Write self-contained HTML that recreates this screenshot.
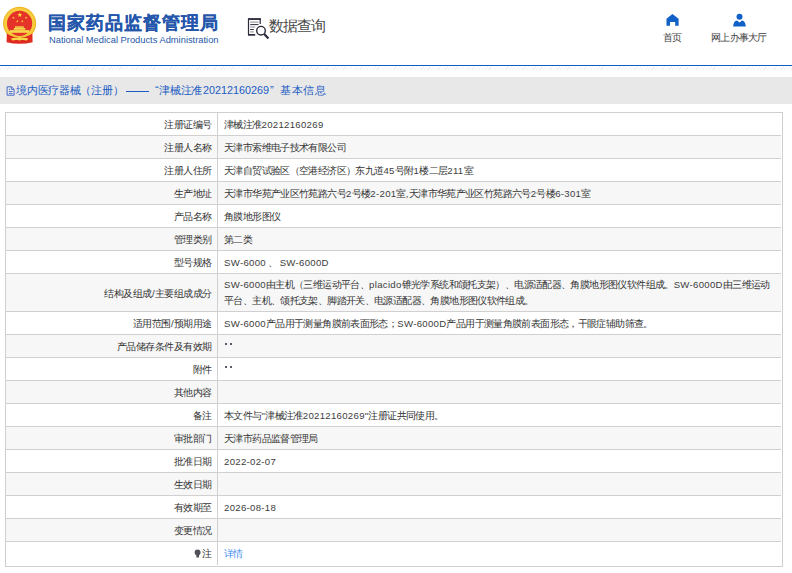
<!DOCTYPE html>
<html><head><meta charset="utf-8">
<style>
*{margin:0;padding:0;box-sizing:border-box}
html,body{width:792px;height:573px;overflow:hidden;background:#fff;font-family:"Liberation Sans",sans-serif;color:#333}
.abs{position:absolute}
#emblem{left:0;top:4px;width:40px;height:44px}
#title{left:48px;top:11px;font-size:18px;letter-spacing:1px;font-weight:bold;color:#2456ab;-webkit-text-stroke:0.15px #2456ab;white-space:nowrap;line-height:24px}
#eng{left:49px;top:35px;font-size:9.33px;color:#2658a8;white-space:nowrap;line-height:10px}
#qicon{left:246px;top:16px;width:24px;height:24px}
#qtext{left:268.5px;top:17px;font-size:15px;letter-spacing:-0.9px;color:#484848;line-height:18px;white-space:nowrap}
.nav{font-size:10px;letter-spacing:-0.75px;color:#444;white-space:nowrap;line-height:11px}
#bline{left:0;top:65px;width:792px;height:1px;background:#0a5fc0}
#dots{left:0;top:67px;width:792px;height:3px;background:repeating-linear-gradient(135deg,#fff 0,#fff 1.5px,#ededed 1.5px,#ededed 2.4px)}
#crumb{left:0;top:77px;width:792px;height:27px;background:#e8e8e8}
.crumbt{top:84px;font-size:11px;letter-spacing:-0.2px;color:#1a5bc4;line-height:13px;white-space:nowrap}
#tbl{left:5px;top:112px;width:778px;height:455px;border:1px solid #cfcfcf}
.row{position:absolute;left:0;width:775px;border-bottom:1px solid #d1cfd0}
.row.g{background:#f7f7f7}
.lab{position:absolute;left:0;top:0;width:212px;height:100%;padding-top:1px;border-right:1px solid #d1cfd0;text-align:right;padding-right:5px;font-size:10px;letter-spacing:-0.48px;color:#333;display:flex;align-items:center;justify-content:flex-end;white-space:nowrap}
.val{position:absolute;left:218px;top:0;right:0;height:100%;padding-top:1px;font-size:10px;letter-spacing:-0.62px;color:#333;display:flex;align-items:center;white-space:nowrap;line-height:16px}
.lat{font-size:9.6px;letter-spacing:0.3px;color:#3d3d3d}
.link{color:#3c8cf0}
.dd{display:inline-block;width:2.4px;height:2px;background:#5a5a6a;margin-left:0.6px;margin-right:2px;position:relative;top:-4.8px}
.pin{display:inline-block;width:8px;height:9px;margin-right:0.5px;position:relative;top:1px}
</style></head><body>
<svg id="emblem" class="abs" viewBox="0 4 40 44">
  <circle cx="19.6" cy="23.4" r="16.6" fill="#f0b92a"/>
  <circle cx="19.6" cy="23.4" r="15.4" fill="#f7cd3e"/>
  <circle cx="19.6" cy="23.4" r="12.6" fill="#e5332a"/>
  <path d="M6.8 33.5 Q19.6 41 32.4 33.5 L32.6 42.2 Q19.6 45.5 6.6 42.2 Z" fill="#df2a20"/>
  <rect x="10" y="30.1" width="19.2" height="2.7" fill="#f6d84a"/>
  <rect x="13.8" y="28" width="11.5" height="1.8" fill="#f6d84a"/>
  <rect x="15" y="26.3" width="8.8" height="1.5" fill="#f6d84a"/>
  <path d="M9 33.2 Q19.6 39.5 30.2 33.2 L30.2 34.8 Q19.6 41 9 34.8 Z" fill="#f2c233"/>
  <path d="M11 38.6 Q15 37 19.6 38.3 Q24.2 37 28.2 38.6 L27 40.4 Q19.6 39.2 12.2 40.4 Z" fill="#f6d84a"/>
  <ellipse cx="19.6" cy="38.8" rx="2.8" ry="1.6" fill="#f6d84a"/>
  <path d="M19.80 12.30 L20.44 14.02 L22.27 14.10 L20.84 15.24 L21.33 17.00 L19.80 15.99 L18.27 17.00 L18.76 15.24 L17.33 14.10 L19.16 14.02Z" fill="#f8d838"/>
  <path d="M13.40 16.45 L13.73 17.34 L14.68 17.38 L13.94 17.98 L14.19 18.89 L13.40 18.37 L12.61 18.89 L12.86 17.98 L12.12 17.38 L13.07 17.34Z" fill="#f8d838"/>
  <path d="M26.10 16.35 L26.43 17.24 L27.38 17.28 L26.64 17.88 L26.89 18.79 L26.10 18.27 L25.31 18.79 L25.56 17.88 L24.82 17.28 L25.77 17.24Z" fill="#f8d838"/>
  <path d="M17.30 19.95 L17.63 20.84 L18.58 20.88 L17.84 21.48 L18.09 22.39 L17.30 21.87 L16.51 22.39 L16.76 21.48 L16.02 20.88 L16.97 20.84Z" fill="#f8d838"/>
  <path d="M22.30 19.95 L22.63 20.84 L23.58 20.88 L22.84 21.48 L23.09 22.39 L22.30 21.87 L21.51 22.39 L21.76 21.48 L21.02 20.88 L21.97 20.84Z" fill="#f8d838"/>
</svg>
<div id="title" class="abs">国家药品监督管理局</div>
<div id="eng" class="abs">National Medical Products Administration</div>

<svg id="qicon" class="abs" viewBox="246 16 24 24">
  <path d="M248.5 35 V19 H260.2 V24" fill="none" stroke="#2b2b3b" stroke-width="1.2"/>
  <rect x="248" y="18.2" width="12.8" height="1.7" fill="#2b2b3b"/>
  <rect x="248" y="34" width="7.2" height="1.7" fill="#2b2b3b"/>
  <rect x="250.2" y="21.6" width="8.3" height="1" fill="#8a8a96"/>
  <rect x="250.2" y="24.1" width="8.3" height="1" fill="#2b2b3b"/>
  <rect x="250.2" y="26.5" width="5" height="1" fill="#8a8a96"/>
  <rect x="250.2" y="29" width="3.5" height="1" fill="#2b2b3b"/>
  <rect x="250.2" y="31.4" width="3.5" height="1" fill="#8a8a96"/>
  <circle cx="261" cy="30.7" r="4.3" fill="#fff" stroke="#2b2b3b" stroke-width="1.4"/>
  <path d="M264.2 34 L268.4 38.4" stroke="#2b2b3b" stroke-width="2.2"/>
</svg>
<div id="qtext" class="abs">数据查询</div>

<svg class="abs" style="left:660px;top:10px" width="24" height="20" viewBox="660 10 24 20">
  <path d="M672.4 13.9 L678.6 18.8 V25.8 H675.2 V22 H670 V25.8 H666.5 V18.8 Z" fill="#1060c8"/>
</svg>
<div class="abs nav" style="left:663px;top:32px">首页</div>
<svg class="abs" style="left:728px;top:10px" width="24" height="20" viewBox="728 10 24 20">
  <circle cx="739.5" cy="16.7" r="3.0" fill="#1060c8"/>
  <path d="M733.1 26.6 Q733.5 21 737 20.4 L739.5 22.6 L742 20.4 Q745.5 21 745.8 26.6 Z" fill="#1060c8"/>
</svg>
<div class="abs nav" style="left:711px;top:32px">网上办事大厅</div>

<div id="bline" class="abs"></div>
<div id="dots" class="abs"></div>
<div id="crumb" class="abs"></div>
<svg class="abs" style="left:5px;top:85px" width="11" height="12" viewBox="0 0 11 12">
  <path d="M2.1 1.8 H6.4 L9.1 4.4 V10.2 H2.1 Z" fill="none" stroke="#3a62c8" stroke-width="0.95"/>
  <path d="M6.4 1.8 V4.4 H9.1" fill="none" stroke="#3a62c8" stroke-width="0.8"/>
  <path d="M3.9 4.4 H5 M3.9 6.5 H7.5 M3.9 8.45 H7.5" stroke="#3a62c8" stroke-width="0.9"/>
</svg>
<div class="abs crumbt" style="left:16px;letter-spacing:-0.25px">境内医疗器械</div>
<div class="abs crumbt" style="left:79.5px;letter-spacing:0">（注册）</div>
<div class="abs" style="left:126px;top:91px;width:23px;height:1px;background:#1a5bc4"></div>
<div class="abs crumbt" style="left:155px">“</div>
<div class="abs crumbt" style="left:159px">津械注准</div>
<div class="abs crumbt" style="left:203px;font-size:10.8px;letter-spacing:0">20212160269</div>
<div class="abs crumbt" style="left:270px">”</div>
<div class="abs crumbt" style="left:280px;letter-spacing:0.6px">基本信息</div>

<div id="tbl" class="abs">
<!--TBL-->
<div class="row" style="top:0px;height:23px;"><div class="lab"><span>注册证编号</span></div><div class="val"><span>津械注准<span class="lat">20212160269</span></span></div></div>
<div class="row g" style="top:23px;height:23px;"><div class="lab"><span>注册人名称</span></div><div class="val"><span>天津市索维电子技术有限公司</span></div></div>
<div class="row" style="top:46px;height:23px;"><div class="lab"><span>注册人住所</span></div><div class="val"><span>天津自贸试验区（空港经济区）东九道<span class="lat">45</span>号附<span class="lat">1</span>楼二层<span class="lat">211</span>室</span></div></div>
<div class="row g" style="top:69px;height:23px;"><div class="lab"><span>生产地址</span></div><div class="val"><span>天津市华苑产业区竹苑路六号<span class="lat">2</span>号楼<span class="lat">2-201</span>室<span class="lat">,</span>天津市华苑产业区竹苑路六号<span class="lat">2</span>号楼<span class="lat">6-301</span>室</span></div></div>
<div class="row" style="top:92px;height:23px;"><div class="lab"><span>产品名称</span></div><div class="val"><span>角膜地形图仪</span></div></div>
<div class="row g" style="top:115px;height:23px;"><div class="lab"><span>管理类别</span></div><div class="val"><span>第二类</span></div></div>
<div class="row" style="top:138px;height:23px;"><div class="lab"><span>型号规格</span></div><div class="val"><span><span class="lat">SW-6000</span> 、 <span class="lat">SW-6000D</span></span></div></div>
<div class="row g" style="top:161px;height:38px;"><div class="lab" style="padding-top:3px"><span>结构及组成<span class="lat">/</span>主要组成成分</span></div><div class="val"><span><span class="lat">SW-6000</span>由主机（三维运动平台、<span class="lat">placido</span>锥光学系统和颌托支架）、电源适配器、角膜地形图仪软件组成。<span class="lat">SW-6000D</span>由三维运动<br>平台、主机、颌托支架、脚踏开关、电源适配器、角膜地形图仪软件组成。</span></div></div>
<div class="row" style="top:199px;height:23px;"><div class="lab"><span>适用范围<span class="lat">/</span>预期用途</span></div><div class="val"><span><span class="lat">SW-6000</span>产品用于测量角膜前表面形态；<span class="lat">SW-6000D</span>产品用于测量角膜前表面形态，干眼症辅助筛查。</span></div></div>
<div class="row g" style="top:222px;height:23px;"><div class="lab"><span>产品储存条件及有效期</span></div><div class="val"><span><span class="dd"></span><span class="dd"></span></span></div></div>
<div class="row" style="top:245px;height:23px;"><div class="lab"><span>附件</span></div><div class="val"><span><span class="dd"></span><span class="dd"></span></span></div></div>
<div class="row g" style="top:268px;height:23px;"><div class="lab"><span>其他内容</span></div><div class="val"><span></span></div></div>
<div class="row" style="top:291px;height:23px;"><div class="lab"><span>备注</span></div><div class="val"><span>本文件与<span class="lat">"</span>津械注准<span class="lat">20212160269"</span>注册证共同使用。</span></div></div>
<div class="row g" style="top:314px;height:23px;"><div class="lab"><span>审批部门</span></div><div class="val"><span>天津市药品监督管理局</span></div></div>
<div class="row" style="top:337px;height:23px;"><div class="lab"><span>批准日期</span></div><div class="val"><span><span class="lat">2022-02-07</span></span></div></div>
<div class="row g" style="top:360px;height:23px;"><div class="lab"><span>生效日期</span></div><div class="val"><span></span></div></div>
<div class="row" style="top:383px;height:23px;"><div class="lab"><span>有效期至</span></div><div class="val"><span><span class="lat">2026-08-18</span></span></div></div>
<div class="row g" style="top:406px;height:23px;"><div class="lab"><span>变更情况</span></div><div class="val"><span></span></div></div>
<div class="row" style="top:429px;height:23px;border-bottom:0;"><div class="lab"><span><svg class="pin" width="8" height="9" viewBox="0 0 8 9"><path d="M3.6 0.6 C5.5 0.6 6.6 1.9 6.6 3.5 C6.6 4.9 5.6 5.6 5 6.6 V8.4 H2.4 V6.6 C1.7 5.6 0.6 4.9 0.6 3.5 C0.6 1.9 1.7 0.6 3.6 0.6Z" fill="#505058"/></svg>注</span></div><div class="val"><span><span class="link">详情</span></span></div></div>
<!--/TBL-->
</div>
</body></html>
